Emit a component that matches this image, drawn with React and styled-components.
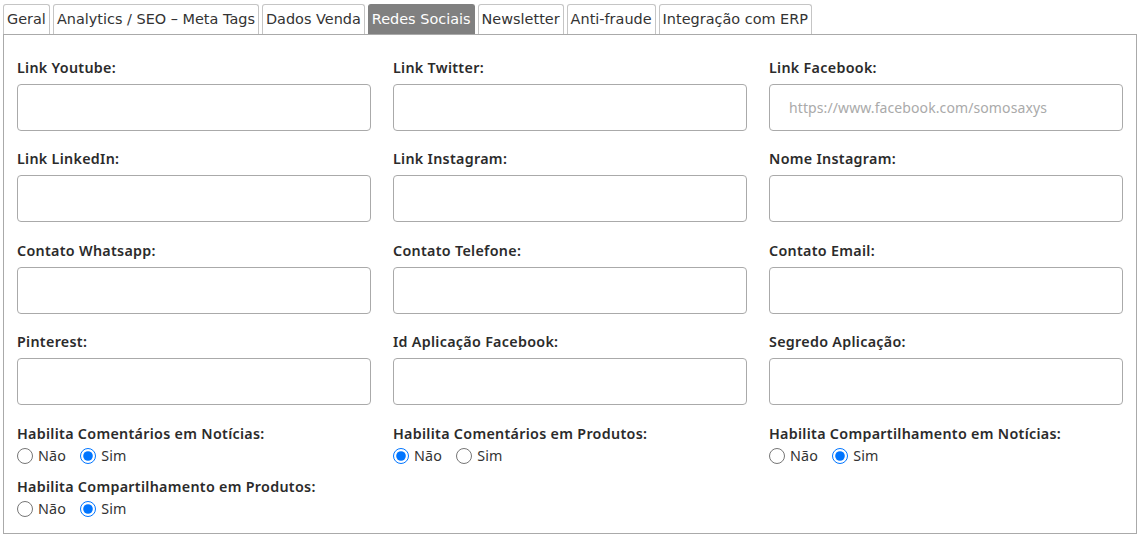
import React from 'react'
import styled, { createGlobalStyle } from 'styled-components'

const GlobalStyle = createGlobalStyle`
  body {
    margin: 0;
    background: #fff;
  }
`

const Page = styled.div`
  padding: 4px 5px 6px 3px;
`

const TabBar = styled.ul`
  display: flex;
  gap: 3px;
  margin: 0;
  padding: 0;
  list-style: none;
`

const Tab = styled.li`
  font-family: "DejaVu Sans", Verdana, sans-serif;
  font-size: 14.45px;
  line-height: 29px;
  height: 30px;
  box-sizing: border-box;
  padding: 0 3px;
  border: 1px solid ${p => (p.active ? '#808080' : '#c5c5c5')};
  border-bottom: none;
  border-radius: 3px 3px 0 0;
  background: ${p => (p.active ? '#808080' : '#fff')};
  color: ${p => (p.active ? '#fff' : '#333')};
  cursor: pointer;
  white-space: nowrap;
`

const Panel = styled.div`
  border: 1px solid #aaa;
  padding: 23px 13px 14px;
  font-family: "Noto Sans", sans-serif;
  color: #2e2e2e;
`

const FieldGrid = styled.div`
  display: grid;
  grid-template-columns: repeat(3, 1fr);
  column-gap: 22px;
  row-gap: 18.3px;
  margin-bottom: 19px;
`

const RadioGrid = styled.div`
  display: grid;
  grid-template-columns: repeat(3, 1fr);
  column-gap: 22px;
  row-gap: 11px;
`

const Field = styled.div`
  display: flex;
  flex-direction: column;
  gap: ${p => (p.tight ? '2px' : '6px')};
`

const Label = styled.label`
  font-size: 14.3px;
  font-weight: 600;
  line-height: 20px;
  letter-spacing: 0.3px;
  color: #2b2b2b;
`

const Input = styled.input`
  box-sizing: border-box;
  height: 47px;
  width: 100%;
  border: 1px solid #aaa;
  border-radius: 4px;
  padding: 0 19px;
  font-family: "Noto Sans", sans-serif;
  font-size: 14px;
  letter-spacing: 0.1px;
  color: #333;
  outline: none;

  &::placeholder {
    color: #aaa;
  }
`

const Options = styled.div`
  display: flex;
  align-items: center;
  gap: 14px;
  height: 20px;
`

const Option = styled.label`
  display: inline-flex;
  align-items: center;
  gap: 5px;
  font-size: 14.3px;
  letter-spacing: 0.2px;
  color: #333;

  input {
    margin: 0;
    width: 16px;
    height: 16px;
  }
`

const fields = [
  ['Link Youtube:', ''],
  ['Link Twitter:', ''],
  ['Link Facebook:', 'https://www.facebook.com/somosaxys'],
  ['Link LinkedIn:', ''],
  ['Link Instagram:', ''],
  ['Nome Instagram:', ''],
  ['Contato Whatsapp:', ''],
  ['Contato Telefone:', ''],
  ['Contato Email:', ''],
  ['Pinterest:', ''],
  ['Id Aplicação Facebook:', ''],
  ['Segredo Aplicação:', ''],
]

const radios = [
  ['comentNoticias', 'Habilita Comentários em Notícias:', 'sim'],
  ['comentProdutos', 'Habilita Comentários em Produtos:', 'nao'],
  ['compNoticias', 'Habilita Compartilhamento em Notícias:', 'sim'],
  ['compProdutos', 'Habilita Compartilhamento em Produtos:', 'sim'],
]

const tabs = ['Geral', 'Analytics / SEO – Meta Tags', 'Dados Venda', 'Redes Sociais', 'Newsletter', 'Anti-fraude', 'Integração com ERP']

const App = () =>
  <Page>
    <GlobalStyle />
    <TabBar>
      {tabs.map(t => <Tab key={t} active={t === 'Redes Sociais'}>{t}</Tab>)}
    </TabBar>
    <Panel>
      <FieldGrid>
        {fields.map(([label, placeholder]) =>
          <Field key={label}>
            <Label>{label}</Label>
            <Input placeholder={placeholder} />
          </Field>
        )}
      </FieldGrid>
      <RadioGrid>
        {radios.map(([name, label, value]) =>
          <Field key={name} tight>
            <Label>{label}</Label>
            <Options>
              <Option><input type="radio" name={name} defaultChecked={value === 'nao'} />Não</Option>
              <Option><input type="radio" name={name} defaultChecked={value === 'sim'} />Sim</Option>
            </Options>
          </Field>
        )}
      </RadioGrid>
    </Panel>
  </Page>

export default App
